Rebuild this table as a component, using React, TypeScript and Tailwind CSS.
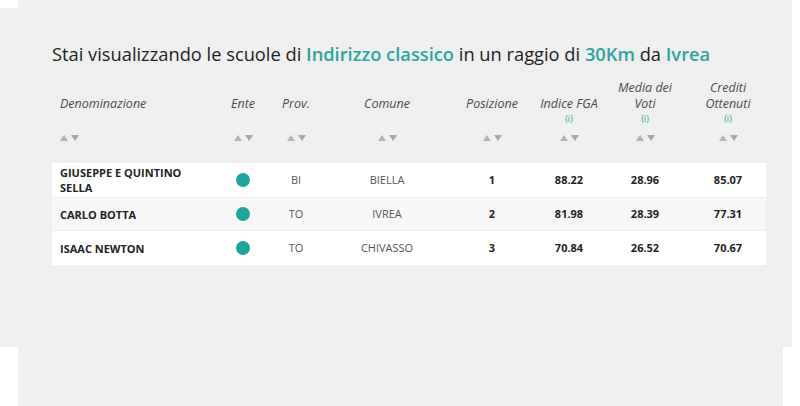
import React from "react";

const teal = "text-[#2aa59f]";

function Arrows({ left }: { left?: boolean }) {
  return (
    <div className={`flex items-center ${left ? "justify-start pl-2" : "justify-center"} gap-[3px] h-[10px]`}>
      <svg width="8" height="6" viewBox="0 0 8 6">
        <polygon points="4,0 8,6 0,6" fill="#b3b3b3" />
      </svg>
      <svg width="8" height="6" viewBox="0 0 8 6">
        <polygon points="0,0 8,0 4,6" fill="#a8a8a8" />
      </svg>
    </div>
  );
}

function Head({ lines, info, left }: { lines: string[]; info?: boolean; left?: boolean }) {
  return (
    <div className={`flex flex-col ${left ? "items-start pl-2" : "items-center"} text-center`}>
      <div className="h-[34px] flex flex-col justify-end text-[12.5px] leading-[16px] italic text-[#4a4a4a]">
        {lines.map((l) => (
          <span key={l}>{l}</span>
        ))}
      </div>
      <div className={`h-[14px] text-[9px] leading-[14px] ${teal}`}>{info ? "(i)" : ""}</div>
    </div>
  );
}

const rows = [
  { name: ["GIUSEPPE E QUINTINO", "SELLA"], prov: "BI", com: "BIELLA", pos: "1", fga: "88.22", media: "28.96", cred: "85.07" },
  { name: ["CARLO BOTTA"], prov: "TO", com: "IVREA", pos: "2", fga: "81.98", media: "28.39", cred: "77.31" },
  { name: ["ISAAC NEWTON"], prov: "TO", com: "CHIVASSO", pos: "3", fga: "70.84", media: "26.52", cred: "70.67" },
];

const grid = "grid grid-cols-[170px_42px_64px_118px_92px_62px_90px_76px]";

export default function App() {
  return (
    <div className="w-[800px] h-[406px] bg-white overflow-hidden" style={{ fontFamily: '"Open Sans", sans-serif' }}>
      <div className="h-[8px] ml-[18px] mr-[8px] bg-[#efefef]" />
      <div className="h-[339px] mr-[8px] bg-[#efefef] pl-[52px] pt-[33px]">
        <h1 className="text-[18.3px] leading-[26px] text-[#222]">
          Stai visualizzando le scuole di <span className={`font-semibold ${teal}`}>Indirizzo classico</span> in un raggio di{" "}
          <span className={`font-semibold ${teal}`}>30Km</span> da <span className={`font-semibold ${teal}`}>Ivrea</span>
        </h1>
        <div className={`${grid} mt-[11px] w-[714px]`}>
          <Head lines={["Denominazione"]} left />
          <Head lines={["Ente"]} />
          <Head lines={["Prov."]} />
          <Head lines={["Comune"]} />
          <Head lines={["Posizione"]} />
          <Head lines={["Indice FGA"]} info />
          <Head lines={["Media dei", "Voti"]} info />
          <Head lines={["Crediti", "Ottenuti"]} info />
        </div>
        <div className={`${grid} w-[714px] mt-[7px]`}>
          <Arrows left />
          <Arrows />
          <Arrows />
          <Arrows />
          <Arrows />
          <Arrows />
          <Arrows />
          <Arrows />
        </div>
        <div className="mt-[20px] w-[714px] bg-white">
          {rows.map((r, i) => (
            <div
              key={r.pos}
              className={`${grid} items-center h-[34px] text-[11px] ${i === 1 ? "bg-[#f7f7f7] border-y border-[#eeeeee]" : "bg-white"}`}
            >
              <div className="pl-2 font-bold text-[#222] leading-[15px]">
                {r.name.map((n) => (
                  <div key={n}>{n}</div>
                ))}
              </div>
              <div className="flex justify-center">
                <span className="w-[14px] h-[14px] rounded-full bg-[#1fa39d]" />
              </div>
              <div className="text-center text-[#555]">{r.prov}</div>
              <div className="text-center text-[#555]">{r.com}</div>
              <div className="text-center font-bold text-[#222]">{r.pos}</div>
              <div className="text-center font-bold text-[#222]">{r.fga}</div>
              <div className="text-center font-bold text-[#222]">{r.media}</div>
              <div className="text-center font-bold text-[#222]">{r.cred}</div>
            </div>
          ))}
        </div>
      </div>
      <div className="h-[59px] ml-[18px] mr-[17px] bg-[#efefef]" />
    </div>
  );
}
